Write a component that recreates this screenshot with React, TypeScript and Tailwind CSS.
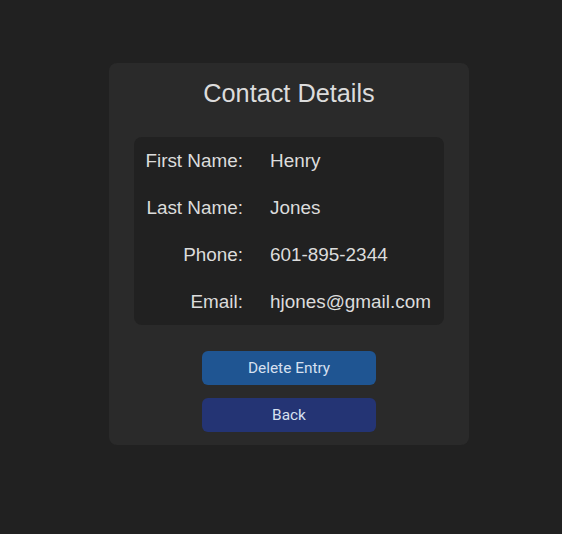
import React from "react";

const rows: [string, string][] = [
  ["First Name:", "Henry"],
  ["Last Name:", "Jones"],
  ["Phone:", "601-895-2344"],
  ["Email:", "hjones@gmail.com"],
];

export default function App() {
  return (
    <div className="min-h-[534px] w-full bg-[#212121] pt-[63px] font-['Liberation_Sans',Arial,sans-serif]">
      <div className="ml-[109px] flex w-[360px] flex-col items-center rounded-lg bg-[#2a2a2a] pt-[15px] pb-[13px]">
        <h2 className="h-[30px] text-[25.3px] leading-[30px] text-[#dcdcdc]">Contact Details</h2>
        <div className="mt-[29px] w-[310px] rounded-lg bg-[#212121]">
          <div className="grid grid-cols-[109px_1fr] gap-x-[27px]">
            {rows.map(([k, v]) => (
              <React.Fragment key={k}>
                <div className="flex h-[47px] items-center justify-end whitespace-nowrap pt-[2px] text-[18.9px] text-[#dcdcdc]">{k}</div>
                <div className="flex h-[47px] items-center whitespace-nowrap pt-[2px] text-[18.9px] text-[#dcdcdc]">{v}</div>
              </React.Fragment>
            ))}
          </div>
        </div>
        <div className="mt-[26px] flex flex-col gap-[13px] font-['Roboto',sans-serif]">
          <button className="h-[34px] w-[174px] rounded-md bg-[#1f5592] pt-[2px] text-[15.4px] text-[#d6e0f0]">Delete Entry</button>
          <button className="h-[34px] w-[174px] rounded-md bg-[#243474] pt-[2px] text-[15.4px] text-[#d6e0f0]">Back</button>
        </div>
      </div>
    </div>
  );
}
